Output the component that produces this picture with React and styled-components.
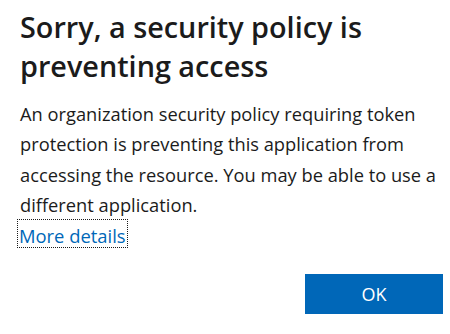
import React from "react";
import styled, { createGlobalStyle } from "styled-components";

const Global = createGlobalStyle`
  html, body { margin: 0; padding: 0; background: #ffffff; }
  body { font-family: "Open Sans", "Noto Sans", sans-serif; color: #1b1b1b; }
`;

const Dialog = styled.div`
  width: 450px;
  height: 334px;
  box-sizing: border-box;
  padding: 7px 7px 0 20px;
  display: flex;
  flex-direction: column;
`;

const Title = styled.h1`
  margin: 0;
  font-size: 28.8px;
  line-height: 39px;
  font-weight: 600;
  color: #1b1b1b;
  width: 420px;
`;

const Body = styled.p`
  margin: 14px 0 0;
  font-size: 18.3px;
  line-height: 30.3px;
  color: #1b1b1b;
  width: 423px;
`;

const DetailsLink = styled.a`
  align-self: flex-start;
  margin-top: 0;
  margin-left: -2px;
  padding: 5px 1px 0;
  font-size: 18.4px;
  line-height: 22px;
  color: #0067b8;
  text-decoration: none;
  outline: 1px dotted #1b1b1b;
  outline-offset: 0;
`;

const Footer = styled.div`
  display: flex;
  justify-content: flex-end;
  margin-top: 27px;
`;

const OkButton = styled.button`
  width: 138px;
  height: 40px;
  border: none;
  background: #0067b8;
  color: #ffffff;
  font-family: "Open Sans", "Noto Sans", sans-serif;
  font-size: 18px;
  padding: 0;
`;

export default function App() {
  return (
    <>
      <Global />
      <Dialog>
        <Title>Sorry, a security policy is preventing access</Title>
        <Body>
          An organization security policy requiring token protection is
          preventing this application from accessing the resource. You may be
          able to use a different application.
        </Body>
        <DetailsLink href="#">More details</DetailsLink>
        <Footer>
          <OkButton>OK</OkButton>
        </Footer>
      </Dialog>
    </>
  );
}
